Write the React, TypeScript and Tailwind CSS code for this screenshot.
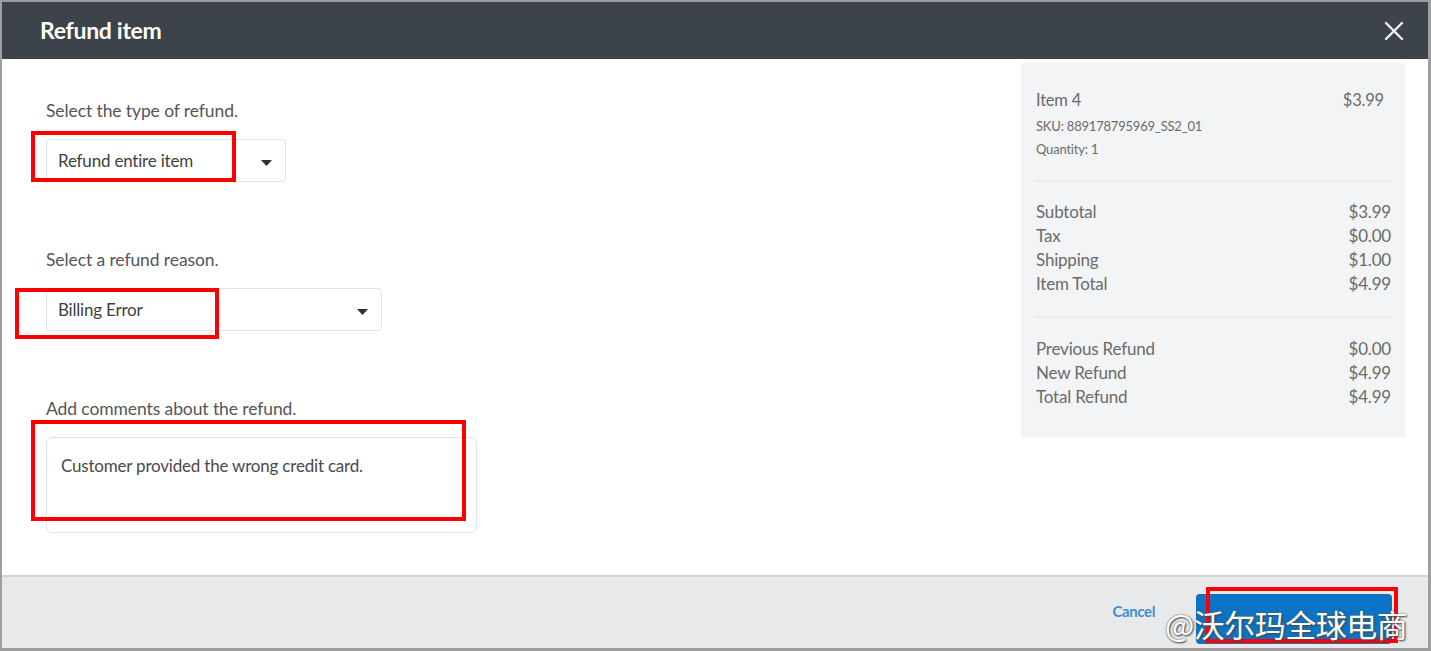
import React from "react";

function Caret() {
  return (
    <svg width="11" height="6" viewBox="0 0 11 6" className="block">
      <path d="M0 0 H11 L5.5 6 Z" fill="#2f2f2f" />
    </svg>
  );
}

function Row({ label, value }: { label: string; value: string }) {
  return (
    <div className="flex justify-between h-[24px] items-center text-[17px] text-[#6b6b6b] tracking-[-0.2px]">
      <span>{label}</span>
      <span>{value}</span>
    </div>
  );
}

export default function App() {
  return (
    <div className="relative w-[1431px] h-[651px] flex flex-col bg-white border-l-2 border-r-[3px] border-t-2 border-b-[3px] border-[#9e9e9e] font-['Lato',sans-serif] overflow-hidden">
      {/* Header */}
      <div className="h-[57px] shrink-0 bg-[#3c434a] flex items-center justify-between pl-[38px] pr-[24px]">
        <span className="text-white text-[23px] font-bold tracking-[-0.3px]">Refund item</span>
        <svg width="20" height="20" viewBox="0 0 20 20">
          <path d="M2 2 L18 18 M18 2 L2 18" stroke="#f2f2f2" strokeWidth="2.4" strokeLinecap="round" />
        </svg>
      </div>

      {/* Body */}
      <div className="flex-1 flex">
        <div className="flex-1 pl-[44px] pt-[40px] text-[#555]">
          <div className="h-[24px] leading-[24px] text-[17.5px] tracking-[-0.1px]">Select the type of refund.</div>
          <div className="mt-[16px] w-[240px] h-[43px] border border-[#dfe4e8] rounded-[4px] flex items-center justify-between pl-[11px] pr-[13px] text-[17px] tracking-[-0.2px] text-[#3f3f3f]">
            <span>Refund entire item</span>
            <span className="mt-[5px]"><Caret /></span>
          </div>

          <div className="mt-[66px] h-[24px] leading-[24px] text-[17.5px] tracking-[-0.1px]">Select a refund reason.</div>
          <div className="mt-[16px] w-[336px] h-[43px] border border-[#dfe4e8] rounded-[4px] flex items-center justify-between pl-[11px] pr-[13px] text-[17px] tracking-[-0.2px] text-[#3f3f3f]">
            <span>Billing Error</span>
            <span className="mt-[5px]"><Caret /></span>
          </div>

          <div className="mt-[66px] h-[24px] leading-[24px] text-[17.5px] tracking-[-0.1px]">Add comments about the refund.</div>
          <div className="mt-[16px] w-[431px] h-[96px] border border-[#dfe4e8] rounded-[6px] pl-[14px] pt-[15px] text-[17px] tracking-[-0.2px] text-[#4a4a4a]">
            Customer provided the wrong credit card.
          </div>
        </div>

        <div className="w-[384px] h-[374px] mt-[4px] mr-[23px] bg-[#f3f4f6] pl-[15px] pr-[14px] pt-[27px] text-[#6b6b6b]">
          <div className="flex justify-between items-center h-[20px] text-[16.5px] pr-[7px] tracking-[-0.2px]">
            <span>Item 4</span>
            <span>$3.99</span>
          </div>
          <div className="mt-[6px] h-[20px] leading-[20px] text-[13px] tracking-[-0.2px]">SKU: 889178795969_SS2_01</div>
          <div className="mt-[3px] h-[20px] leading-[20px] text-[13px] tracking-[-0.2px]">Quantity: 1</div>
          <div className="mt-[21px] h-[2px] bg-[#e9eaec]" />
          <div className="mt-[18px]">
            <Row label="Subtotal" value="$3.99" />
            <Row label="Tax" value="$0.00" />
            <Row label="Shipping" value="$1.00" />
            <Row label="Item Total" value="$4.99" />
          </div>
          <div className="mt-[20px] h-[2px] bg-[#e9eaec]" />
          <div className="mt-[19px]">
            <Row label="Previous Refund" value="$0.00" />
            <Row label="New Refund" value="$4.99" />
            <Row label="Total Refund" value="$4.99" />
          </div>
        </div>
      </div>

      {/* Footer */}
      <div className="h-[73px] shrink-0 bg-[#e8e9eb] border-t-2 border-[#d2d3d5] flex items-start justify-end pr-[36px] pt-[17px]">
        <span className="mt-[6px] mr-[41px] text-[15px] font-bold text-[#3d8fd1] tracking-[-0.4px]">Cancel</span>
        <div className="w-[196px] h-[50px] rounded-[4px] bg-[#0b74c6]" />
      </div>

      {/* Annotation boxes */}
      <div className="absolute left-[29px] top-[129px] w-[205px] h-[51px] border-[4px] border-[#ff0000]" />
      <div className="absolute left-[13px] top-[286px] w-[204px] h-[51px] border-[4px] border-[#ff0000]" />
      <div className="absolute left-[29px] top-[418px] w-[435px] h-[101px] border-[4px] border-[#ff0000]" />
      <div className="absolute left-[1204px] top-[585px] w-[192px] h-[56px] border-[4px] border-[#ff0000]" />

      {/* Watermark */}
      <div
        className="absolute left-[1163px] top-[602px] text-[31px] leading-[40px] text-white font-['Noto_Sans_CJK_SC',sans-serif] tracking-[-0.5px] [text-shadow:0_0_2px_#555,1px_1px_2px_#444]"
      >
        @沃尔玛全球电商
      </div>
    </div>
  );
}
